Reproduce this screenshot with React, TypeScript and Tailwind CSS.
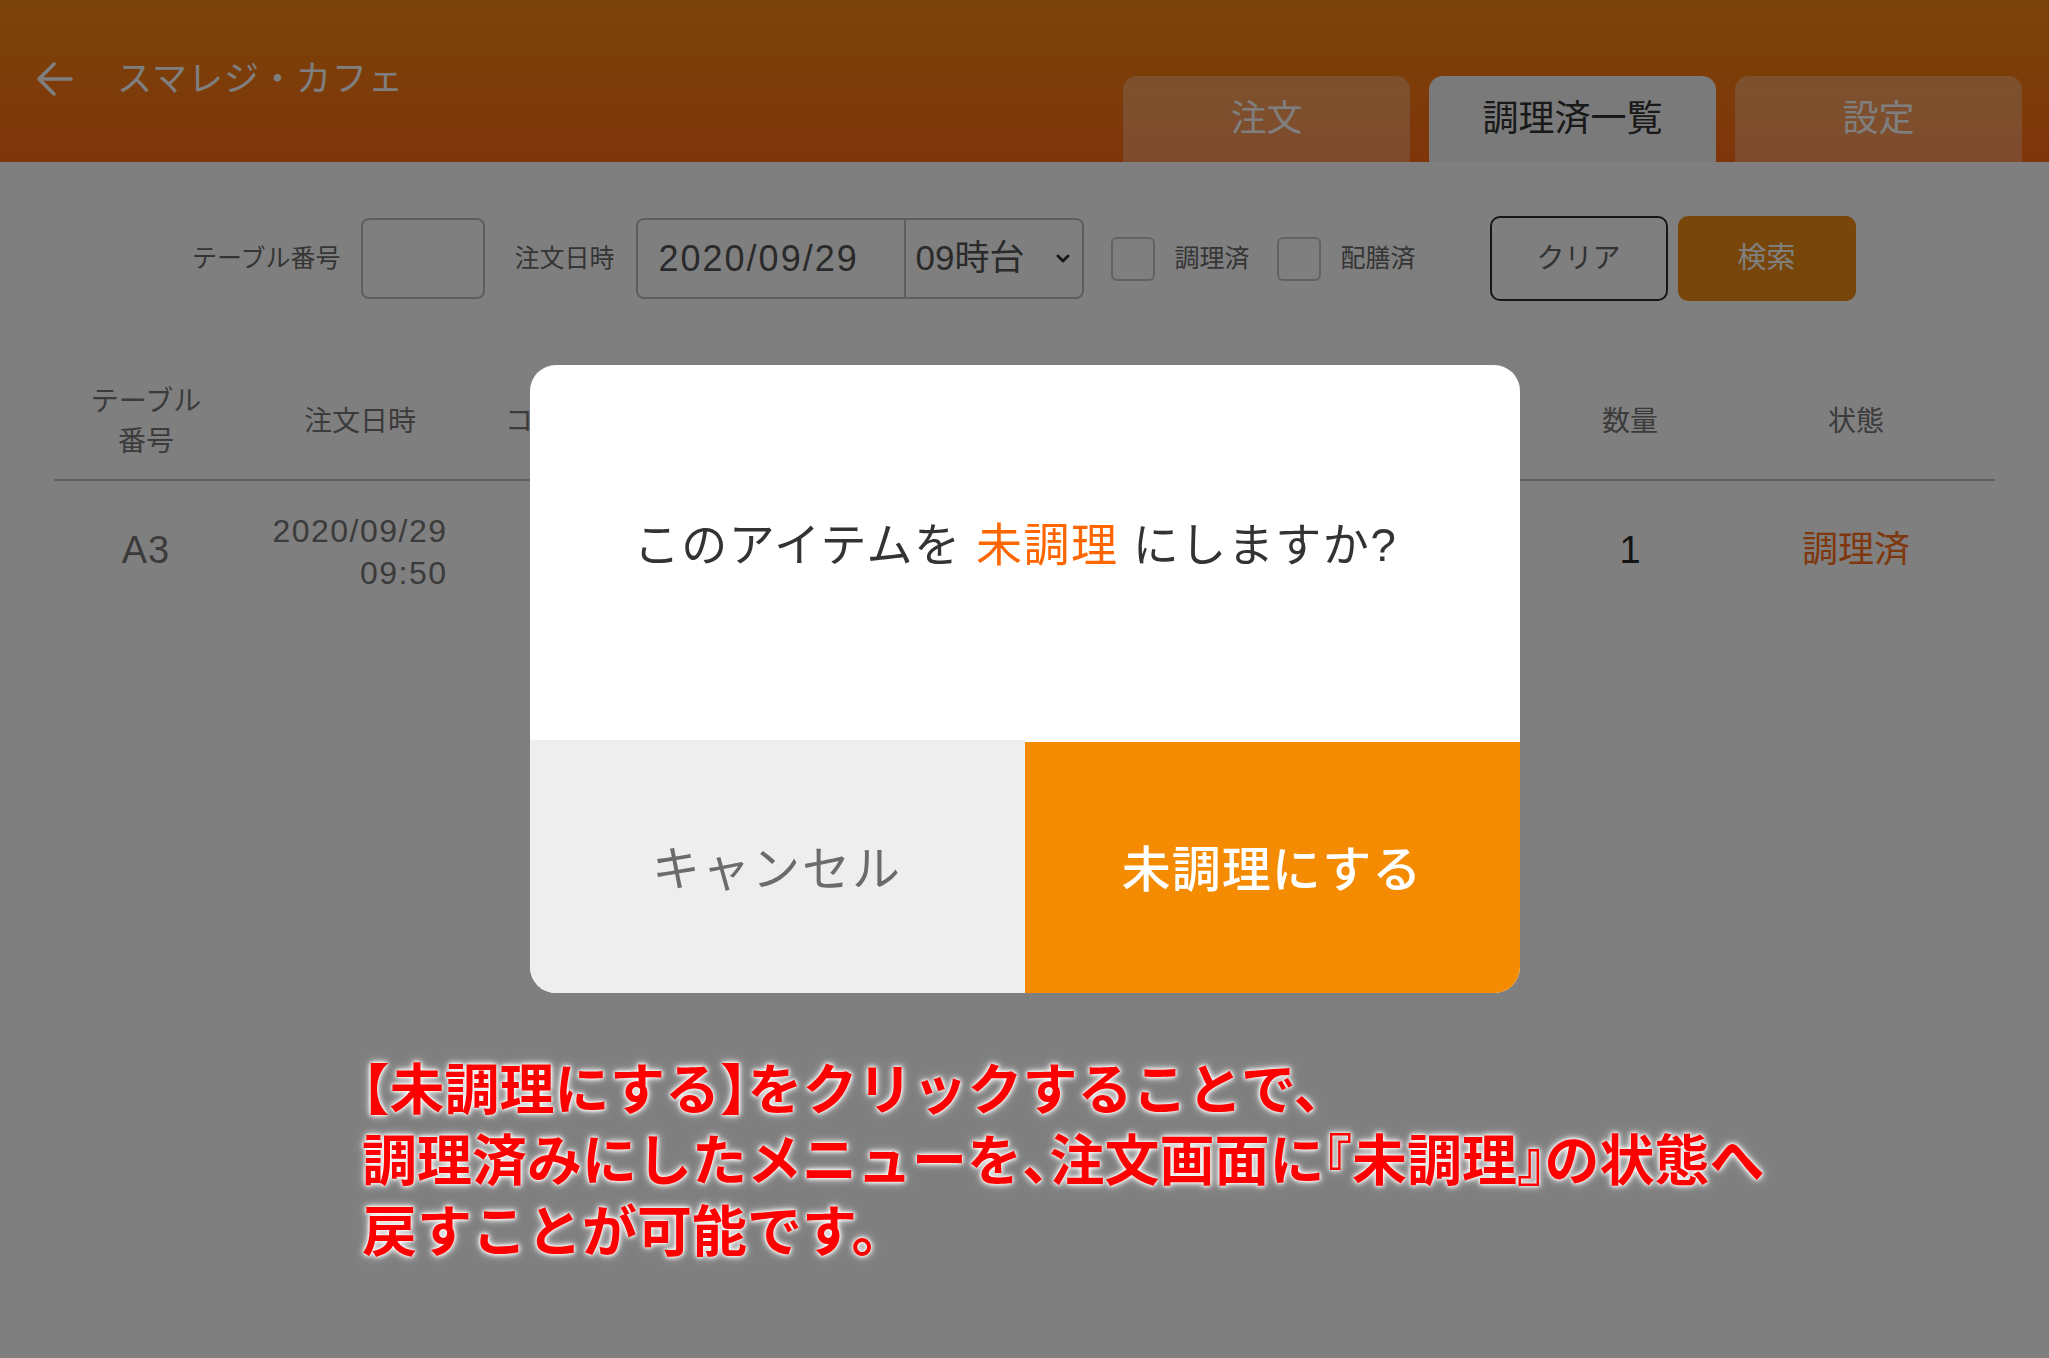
const tabs = [
  { label: "注文", active: false },
  { label: "調理済一覧", active: true },
  { label: "設定", active: false },
];

function Header() {
  return (
    <header className="flex h-[162px] items-start justify-between bg-linear-to-b from-[#f68812] to-[#fe6a14]">
      <div className="flex h-[36px] items-center pl-[37px] mt-[61px]">
        <svg width="36" height="36" viewBox="0 0 36 36" className="text-white">
          <path
            d="M34 18H3M17 3 2 18l15 15"
            fill="none"
            stroke="currentColor"
            strokeWidth="3.5"
            strokeLinecap="round"
            strokeLinejoin="round"
          />
        </svg>
        <h1 className="ml-[44px] text-[35px] tracking-[1px] text-white">スマレジ・カフェ</h1>
      </div>
      <nav className="flex gap-[19px] self-end pr-[27px]">
        {tabs.map((t) => (
          <div
            key={t.label}
            className={
              t.active
                ? "flex h-[86px] w-[287px] items-center justify-center rounded-t-[14px] bg-[#f4f4f4] text-[36px] text-[#333]"
                : "flex h-[86px] w-[287px] items-center justify-center rounded-t-[14px] bg-white/30 text-[36px] text-white"
            }
          >
            {t.label}
          </div>
        ))}
      </nav>
    </header>
  );
}

function Checkbox({ label }: { label: string }) {
  return (
    <label className="flex items-center gap-[20px]">
      <span className="block size-[44px] rounded-[6px] border-2 border-[#c4c4c4] bg-white" />
      <span className="text-[25px] text-[#6a6a6a]">{label}</span>
    </label>
  );
}

function SearchBar() {
  return (
    <div className="mt-[54px] flex h-[85px] items-center pl-[192px] text-[#6a6a6a]">
      <span className="text-[25px]">テーブル番号</span>
      <div className="ml-[20px] h-[81px] w-[124px] rounded-[8px] border-2 border-[#bcbcbc] bg-white" />
      <span className="ml-[30px] text-[25px]">注文日時</span>
      <div className="ml-[21px] flex h-[81px] w-[448px] rounded-[8px] border-2 border-[#bcbcbc] bg-white text-[#555]">
        <div className="flex w-[266px] items-center pl-[21px] text-[36px] tracking-[2px]">2020/09/29</div>
        <div className="flex flex-1 items-center justify-between border-l-2 border-[#bcbcbc] pl-[10px] pr-[12px]">
          <span className="text-[35px]">09時台</span>
          <svg width="14" height="10" viewBox="0 0 14 10">
            <path d="M2 2l5 5 5-5" fill="none" stroke="#333" strokeWidth="3" strokeLinecap="round" strokeLinejoin="round" />
          </svg>
        </div>
      </div>
      <div className="ml-[27px] flex items-center gap-[27px]">
        <Checkbox label="調理済" />
        <Checkbox label="配膳済" />
      </div>
      <button className="ml-[74px] h-[85px] w-[178px] rounded-[10px] border-2 border-[#2c2c2c] bg-white text-[28px] text-[#666]">
        クリア
      </button>
      <button className="ml-[10px] h-[85px] w-[178px] rounded-[10px] bg-[#f08c14] text-[29px] text-white">
        検索
      </button>
    </div>
  );
}

function OrderTable() {
  return (
    <div className="mx-[54px] mt-[64px]">
      <div className="grid h-[116px] grid-cols-[184px_244px_1fr_200px_252px] items-center border-b-2 border-[#bfbfbf] pr-[13px] text-[28px] text-[#777]">
        <div className="text-center leading-[40px]">
          テーブル
          <br />
          番号
        </div>
        <div className="text-center">注文日時</div>
        <div className="pl-[23px]">コメント</div>
        <div className="text-center">数量</div>
        <div className="text-center">状態</div>
      </div>
      <div className="grid h-[138px] grid-cols-[184px_244px_1fr_200px_252px] items-center pr-[13px]">
        <div className="text-center text-[38px] tracking-[1px] text-[#777]">A3</div>
        <div className="pt-[4px] text-center">
          <div className="inline-block text-right text-[32px] leading-[42px] tracking-[1.5px] text-[#777]">
            2020/09/29
            <br />
            09:50
          </div>
        </div>
        <div />
        <div className="text-center text-[38px] text-[#282828]">1</div>
        <div className="text-center text-[36px] text-[#ff6e1a]">調理済</div>
      </div>
    </div>
  );
}

function ConfirmDialog() {
  return (
    <div className="flex h-[628px] w-[990px] flex-col overflow-hidden rounded-[26px] bg-white">
      <div className="flex h-[375px] items-center justify-center pb-[14px] pr-[18px] text-[46px] tracking-[1.5px] text-[#333]">
        <p>
          このアイテムを <span className="text-[#ff6600]">未調理</span> にしますか?
        </p>
      </div>
      <div className="grid flex-1 grid-cols-2">
        <button className="bg-[#eeeeee] pt-[6px] text-[48px] tracking-[2px] text-[#6b6b6b]">キャンセル</button>
        <button className="border-t-2 border-white bg-[#f58b00] pt-[6px] text-[49px] font-medium tracking-[1px] text-white">
          未調理にする
        </button>
      </div>
    </div>
  );
}

export default function App() {
  return (
    <div className="relative h-[1358px] w-[2049px] overflow-hidden bg-white font-['Liberation_Sans','Noto_Sans_CJK_JP',sans-serif]">
      <Header />
      <SearchBar />
      <OrderTable />

      {/* Modal overlay */}
      <div className="fixed inset-0 flex flex-col items-center bg-black/50 pt-[365px]">
        <ConfirmDialog />
        <p className="mt-[62px] self-start pl-[362px] text-[55px] font-bold leading-[71px] text-[#ff0000] [font-feature-settings:'halt'] [text-shadow:0_0_3px_#fff,0_0_5px_#fff,0_0_8px_#fff]">
          【未調理にする】をクリックすることで、
          <br />
          調理済みにしたメニューを、注文画面に『未調理』の状態へ
          <br />
          戻すことが可能です。
        </p>
      </div>
    </div>
  );
}
